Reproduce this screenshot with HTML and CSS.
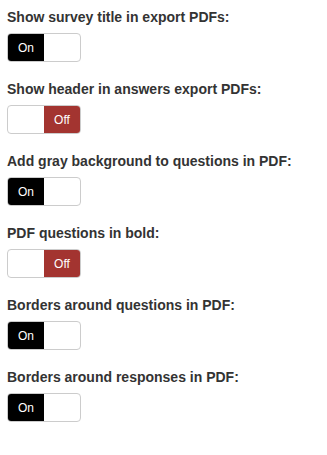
FILE: index.html
```html
<!DOCTYPE html>
<html lang="en">
<head>
    <meta charset="UTF-8">
    <meta name="viewport" content="width=device-width, initial-scale=1.0">
    <title>PDF export settings</title>
    <link rel="stylesheet" href="styles.css">
</head>
<body>
    <div class="settings">
        <div class="setting">
            <label class="setting-label">Show survey title in export PDFs:</label>
            <div class="toggle on">
                <span class="toggle-on">On</span>
                <span class="toggle-off"></span>
            </div>
        </div>
        <div class="setting">
            <label class="setting-label">Show header in answers export PDFs:</label>
            <div class="toggle off">
                <span class="toggle-on"></span>
                <span class="toggle-off">Off</span>
            </div>
        </div>
        <div class="setting">
            <label class="setting-label">Add gray background to questions in PDF:</label>
            <div class="toggle on">
                <span class="toggle-on">On</span>
                <span class="toggle-off"></span>
            </div>
        </div>
        <div class="setting">
            <label class="setting-label">PDF questions in bold:</label>
            <div class="toggle off">
                <span class="toggle-on"></span>
                <span class="toggle-off">Off</span>
            </div>
        </div>
        <div class="setting">
            <label class="setting-label">Borders around questions in PDF:</label>
            <div class="toggle on">
                <span class="toggle-on">On</span>
                <span class="toggle-off"></span>
            </div>
        </div>
        <div class="setting">
            <label class="setting-label">Borders around responses in PDF:</label>
            <div class="toggle on">
                <span class="toggle-on">On</span>
                <span class="toggle-off"></span>
            </div>
        </div>
    </div>
</body>
</html>
```
FILE: styles.css
```css
body {
    margin: 0;
    padding: 7px;
    background-color: #fff;
    font-family: "Liberation Sans", Arial, sans-serif;
    color: #333;
}
.setting {
    margin-bottom: 17px;
}
.setting-label {
    display: block;
    font-size: 14px;
    font-weight: bold;
    line-height: 20px;
    margin-bottom: 6px;
}
.toggle {
    display: flex;
    width: 72px;
    height: 27px;
    border: 1px solid #ccc;
    border-radius: 4px;
    overflow: hidden;
}
.toggle span {
    flex: 1;
    display: flex;
    align-items: center;
    justify-content: center;
    font-size: 12px;
    color: #fff;
}
.toggle.on .toggle-on {
    background-color: #000;
}
.toggle.off .toggle-off {
    background-color: #a33430;
}
```
